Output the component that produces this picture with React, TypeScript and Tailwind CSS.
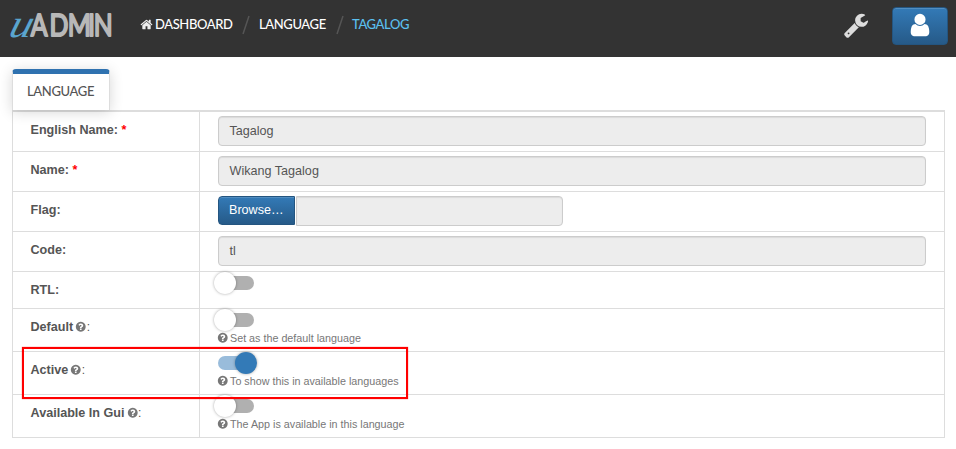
import React from "react";

const ICONS = {
  home: "M1472 992v480q0 26-19 45t-45 19h-384v-384h-256v384h-384q-26 0-45-19t-19-45v-480q0-1 .5-3t.5-3l575-474 575 474q1 2 1 6zm223-69l-62 74q-8 9-21 11h-3q-13 0-21-7l-692-577-692 577q-12 8-24 7-13-2-21-11l-62-74q-8-10-7-23.5t11-21.5l719-599q32-26 76-26t76 26l244 204v-195q0-14 9-23t23-9h192q14 0 23 9t9 23v408l219 182q10 8 11 21.5t-7 23.5z",
  wrench:
    "M448 1472q0-26-19-45t-45-19-45 19-19 45 19 45 45 19 45-19 19-45zm644-420l-682 682q-37 37-90 37-52 0-91-37l-106-108q-38-36-38-90 0-53 38-91l681-681q39 98 114.5 173.5t173.5 114.5zm634-435q0 39-23 106-47 134-164.5 217.5t-258.5 83.5q-185 0-316.5-131.5t-131.5-316.5 131.5-316.5 316.5-131.5q58 0 121.5 16.5t107.5 46.5q16 11 16 28t-16 28l-293 169v224l193 107q5-3 79-48.5t135.5-81 70.5-35.5q15 0 23.5 10t8.5 25z",
  user: "M1536 1399q0 109-62.5 187t-150.5 78h-854q-88 0-150.5-78t-62.5-187q0-85 8.5-160.5t31.5-152 58.5-131 94-89 134.5-34.5q131 128 313 128t313-128q76 0 134.5 34.5t94 89 58.5 131 31.5 152 8.5 160.5zm-256-887q0 159-112.5 271.5t-271.5 112.5-271.5-112.5-112.5-271.5 112.5-271.5 271.5-112.5 271.5 112.5 112.5 271.5z",
  question:
    "M1024 1376v-192q0-14-9-23t-23-9h-192q-14 0-23 9t-9 23v192q0 14 9 23t23 9h192q14 0 23-9t9-23zm256-672q0-88-55.5-163t-138.5-116-170-41q-243 0-371 213-15 24 8 42l132 100q7 6 19 6 16 0 25-12 53-68 86-92 34-24 86-24 48 0 85.5 26t37.5 59q0 38-20 61t-68 45q-63 28-115.5 86.5t-52.5 125.5v36q0 14 9 23t23 9h192q14 0 23-9t9-23q0-19 21.5-49.5t54.5-49.5q32-18 49-28.5t46-35 44.5-48 28-60.5 12.5-81zm384 192q0 209-103 385.5t-279.5 279.5-385.5 103-385.5-103-279.5-279.5-103-385.5 103-385.5 279.5-279.5 385.5-103 385.5 103 279.5 279.5 103 385.5z",
};

function Icon({ name, className }: { name: keyof typeof ICONS; className: string }) {
  return (
    <svg viewBox="0 0 1792 1792" fill="currentColor" className={className}>
      <path d={ICONS[name]} />
    </svg>
  );
}

function Logo() {
  return (
    <svg width="112" height="49" viewBox="0 0 112 49" className="shrink-0 overflow-visible">
      <text
        transform="translate(0.5 37) skewX(-16) scale(1.13 1)"
        fontSize="40"
        fontStyle="italic"
        fill="#5aa5cf"
        className="font-['Liberation_Serif',serif]"
      >
        u
      </text>
      <text
        transform="translate(0 36) scale(0.8 1)"
        x="29.8 53 76 101.4 108.6"
        fill="#b8b8b8"
        stroke="#b8b8b8"
        strokeWidth="2"
        strokeLinejoin="round"
        fontSize="31"
        className="font-['Lato',sans-serif]"
      >
        ADMIN
      </text>
    </svg>
  );
}

function Slash() {
  return (
    <svg width="8" height="20" viewBox="0 0 8 20" className="shrink-0">
      <path d="M1 19L7 1" stroke="#555" strokeWidth="1.5" />
    </svg>
  );
}

function Row({
  label,
  required,
  hint,
  height,
  children,
}: {
  label: string;
  required?: boolean;
  hint?: boolean;
  height: string;
  children: React.ReactNode;
}) {
  return (
    <div className={`flex border-b border-[#ddd] ${height}`}>
      <div className="flex w-[187px] shrink-0 items-start border-r border-[#ddd] pt-[9px] pl-[17.5px] leading-[18px]">
        <span className="font-bold">
          {label}
          {!hint && ":"}
          {required && <span className="text-[#f00]"> *</span>}
        </span>
        {hint && (
          <span className="flex h-[18px] items-center pl-[2px]">
            <Icon name="question" className="size-[11.5px] text-[#777]" />
            <span className="text-[12px]">:</span>
          </span>
        )}
      </div>
      <div className="flex-1 pr-[18px] pl-[18px]">{children}</div>
    </div>
  );
}

function TextBox({ value }: { value: string }) {
  return (
    <div className="mt-1 flex h-[30px] items-center rounded-[4px] border border-[#ccc] bg-[#ededed] px-[10.5px] shadow-[inset_0_1px_1px_rgba(0,0,0,0.08)]">
      {value}
    </div>
  );
}

function Toggle({ on, hint }: { on?: boolean; hint?: string }) {
  return (
    <>
      <div className={`mt-1 flex h-[14px] w-9 items-center rounded-full ${on ? "justify-end bg-[#99bcdb]" : "bg-[#b0b0b0]"}`}>
        <div
          className={`size-[22px] shrink-0 rounded-full shadow-[0_0_3px_rgba(0,0,0,0.35)] ${
            on ? "-mr-[3px] bg-[#337ab7]" : "-ml-1 bg-white"
          }`}
        />
      </div>
      {hint && (
        <div className="mt-[4px] flex items-center text-[10.75px] leading-[14px] text-[#777]">
          <Icon name="question" className="-ml-[1.5px] mr-[2px] size-[11.5px] text-[#777]" />
          {hint}
        </div>
      )}
    </>
  );
}

export default function App() {
  return (
    <div className="relative h-[449px] w-[956px] overflow-hidden bg-white font-['Liberation_Sans',Arial,sans-serif] text-[12.6px] text-[#555]">
      <header className="flex h-[57px] items-start bg-[#333]">
        <div className="pl-[7px]">
          <Logo />
        </div>
        <nav className="flex h-[49px] flex-1 items-center pl-[21px] font-['Lato',sans-serif] text-[13px] font-medium tracking-[-0.4px] text-white">
          <Icon name="home" className="mr-[2px] size-[13px] text-[#eee]" />
          <span className="w-[79px] whitespace-nowrap">DASHBOARD</span>
          <span className="ml-[8px]"><Slash /></span>
          <span className="ml-[9px] w-[68px]">LANGUAGE</span>
          <span className="ml-[9px]"><Slash /></span>
          <span className="ml-[8px] text-[#5bc0f0]">TAGALOG</span>
        </nav>
        <Icon name="wrench" className="mt-3 mr-[23px] size-[26px] text-[#ddd]" />
        <button className="mt-[7px] mr-2 flex h-[38px] w-14 justify-center rounded-[4px] border border-[#245580] bg-linear-to-b from-[#337ab7] to-[#265a88] pt-1 text-white shadow-[inset_0_1px_0_rgba(255,255,255,0.15)]">
          <Icon name="user" className="size-[26px]" />
        </button>
      </header>
      <main className="px-3 pr-[11px] pt-3">
        <div className="flex h-[41px]">
          <div className="h-[41px] w-[98px] rounded-t-[4px] border-t-[5px] border-r border-l border-r-[#ddd] border-l-[#ddd] border-t-[#2f72b0] bg-white pt-[7px] pl-[14px] font-['Lato',sans-serif] text-[13px] leading-5 font-medium tracking-[-0.35px] shadow-[0_2px_14px_rgba(0,0,0,0.16)]">
            LANGUAGE
          </div>
        </div>
        <div className="border-t-2 border-r border-l border-[#ddd]">
          <Row label="English Name" required height="h-10"><TextBox value="Tagalog" /></Row>
          <Row label="Name" required height="h-10"><TextBox value="Wikang Tagalog" /></Row>
          <Row label="Flag" height="h-10">
            <div className="mt-1 flex">
              <button className="mr-px flex h-[29px] w-[77px] items-center rounded-l-[4px] border border-[#245580] bg-linear-to-b from-[#337ab7] to-[#265a88] pl-[10px] whitespace-nowrap text-white shadow-[inset_0_1px_0_rgba(255,255,255,0.15)]">
                Browse…
              </button>
              <div className="h-[30px] w-[267px] rounded-r-[4px] border border-[#ccc] bg-[#ededed] shadow-[inset_0_1px_1px_rgba(0,0,0,0.08)]" />
            </div>
          </Row>
          <Row label="Code" height="h-10"><TextBox value="tl" /></Row>
          <Row label="RTL" height="h-[37px]"><Toggle /></Row>
          <Row label="Default" hint height="h-[43px]"><Toggle hint="Set as the default language" /></Row>
          <Row label="Active" hint height="h-[43px]"><Toggle on hint="To show this in available languages" /></Row>
          <Row label="Available In Gui" hint height="h-[43px]"><Toggle hint="The App is available in this language" /></Row>
        </div>
      </main>
      <div className="absolute top-[347px] left-[22px] h-[52px] w-[386px] border-2 border-[#f00] shadow-[0_0_1px_rgba(255,0,0,0.7)]" />
    </div>
  );
}
